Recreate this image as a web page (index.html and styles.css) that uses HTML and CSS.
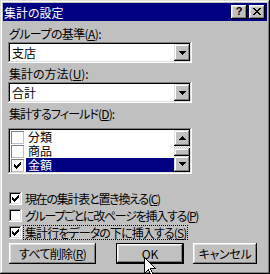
FILE: index.html
```html
<!DOCTYPE html>
<html lang="ja">
<head>
<meta charset="utf-8">
<title>集計の設定</title>
<link rel="stylesheet" href="styles.css">
</head>
<body>
<div class="win">
  <div class="titlebar">
    <span class="title">集計の設定</span>
    <div class="caps">
      <div class="capbtn help">?</div>
      <div class="capbtn close">
        <svg width="8" height="7" viewBox="0 0 8 7" shape-rendering="crispEdges"><path d="M0 0h2v1H0zM6 0h2v1H6zM1 1h2v1H1zM5 1h2v1H5zM2 2h4v1H2zM3 3h2v1H3zM2 4h4v1H2zM1 5h2v1H1zM5 5h2v1H5zM0 6h2v1H0zM6 6h2v1H6z" fill="#000"/></svg>
      </div>
    </div>
  </div>
  <div class="client">
    <div class="lbl lbl-first tight">グループの基準(<u>A</u>):</div>
    <div class="combo">
      <span class="val">支店</span>
      <div class="dd"><svg width="7" height="4" viewBox="0 0 7 4" shape-rendering="crispEdges"><path d="M0 0h7v1H0zM1 1h5v1H1zM2 2h3v1H2zM3 3h1v1H3z" fill="#000"/></svg></div>
    </div>
    <div class="lbl">集計の方法(<u>U</u>):</div>
    <div class="combo">
      <span class="val">合計</span>
      <div class="dd"><svg width="7" height="4" viewBox="0 0 7 4" shape-rendering="crispEdges"><path d="M0 0h7v1H0zM1 1h5v1H1zM2 2h3v1H2zM3 3h1v1H3z" fill="#000"/></svg></div>
    </div>
    <div class="lbl tighter">集計するフィールド(<u>D</u>):</div>
    <div class="listbox">
      <div class="rows">
        <div class="row"><span class="lcb"></span><span class="ltxt">分類</span></div>
        <div class="row"><span class="lcb"></span><span class="ltxt">商品</span></div>
        <div class="row sel"><span class="lcb"><svg width="7" height="7" viewBox="0 0 7 7" shape-rendering="crispEdges"><path d="M0 2h1v3H0zM1 3h1v3H1zM2 4h1v3H2zM3 3h1v3H3zM4 2h1v3H4zM5 1h1v3H5zM6 0h1v3H6z" fill="#000"/></svg></span><span class="ltxt">金額</span></div>
      </div>
      <div class="vscroll">
        <div class="sbtn"><svg width="7" height="4" viewBox="0 0 7 4" shape-rendering="crispEdges"><path d="M3 0h1v1H3zM2 1h3v1H2zM1 2h5v1H1zM0 3h7v1H0z" fill="#000"/></svg></div>
        <div class="track"><div class="thumb"></div></div>
        <div class="sbtn"><svg width="7" height="4" viewBox="0 0 7 4" shape-rendering="crispEdges"><path d="M0 0h7v1H0zM1 1h5v1H1zM2 2h3v1H2zM3 3h1v1H3z" fill="#000"/></svg></div>
      </div>
    </div>
    <div class="checks">
      <div class="chk"><span class="cb"><svg width="7" height="7" viewBox="0 0 7 7" shape-rendering="crispEdges"><path d="M0 2h1v3H0zM1 3h1v3H1zM2 4h1v3H2zM3 3h1v3H3zM4 2h1v3H4zM5 1h1v3H5zM6 0h1v3H6z" fill="#000"/></svg></span><span class="ctxt">現在の集計表と置き換える(<u>C</u>)</span></div>
      <div class="chk"><span class="cb"></span><span class="ctxt">グループごとに改ページを挿入する(<u>P</u>)</span></div>
      <div class="chk"><span class="cb"><svg width="7" height="7" viewBox="0 0 7 7" shape-rendering="crispEdges"><path d="M0 2h1v3H0zM1 3h1v3H1zM2 4h1v3H2zM3 3h1v3H3zM4 2h1v3H4zM5 1h1v3H5zM6 0h1v3H6z" fill="#000"/></svg></span><span class="ctxt ctxt-s focus">集計行をデータの下に挿入する(<u>S</u>)</span></div>
    </div>
    <div class="buttons">
      <button class="btn b-del">すべて削除(<u>R</u>)</button>
      <button class="btn b-ok">OK</button>
      <button class="btn b-cancel">キャンセル</button>
    </div>
  </div>
  <svg class="cursor" width="12" height="19" viewBox="0 0 12 19" shape-rendering="crispEdges">
    <path d="M0.5 0.5V16.5L4.5 12.5L7 18.5L9 17.5L6.5 11.5H11.5Z" fill="#fff" stroke="#000" stroke-width="1"/>
  </svg>
</div>
</body>
</html>
```

FILE: styles.css
```css
* { box-sizing: border-box; margin: 0; padding: 0; }
html, body { width: 270px; height: 274px; overflow: hidden; background: #c0c0c0; }
body {
  font-family: "Noto Sans CJK JP", "Liberation Sans", sans-serif;
  font-size: 12px;
  line-height: 13px;
  color: #000;
  font-feature-settings: "palt";
}
u { text-decoration: underline; text-underline-offset: 1px; }

.win {
  position: relative;
  width: 270px;
  height: 274px;
  background: #c0c0c0;
  padding: 3px;
  box-shadow: inset -1px -1px #000, inset 1px 1px #dfdfdf, inset -2px -2px #808080, inset 2px 2px #fff;
  display: flex;
  flex-direction: column;
}

.titlebar {
  height: 18px;
  flex: none;
  background: #000080;
  color: #fff;
  display: flex;
  align-items: center;
  justify-content: space-between;
  padding: 0 2px 0 1px;
}
.title { font-size: 12px; line-height: 13px; }
.caps { display: flex; gap: 2px; }
.capbtn {
  width: 16px;
  height: 14px;
  background: #c0c0c0;
  box-shadow: inset -1px -1px #000, inset 1px 1px #fff, inset -2px -2px #808080, inset 2px 2px #dfdfdf;
  display: flex;
  align-items: center;
  justify-content: center;
  color: #000;
}
.help { font-family: "Liberation Sans", sans-serif; font-weight: bold; font-size: 11px; line-height: 11px; padding-bottom: 1px; }
.close svg { display: block; margin-top: -1px; }

.client {
  flex: 1;
  display: flex;
  flex-direction: column;
  align-items: flex-start;
  padding-left: 5px;
}

.lbl { margin-top: 4px; padding-left: 1px; height: 13px; white-space: nowrap; }
.lbl-first { margin-top: 6px; }
.tight { letter-spacing: -0.6px; }
.tighter { letter-spacing: -0.9px; }
.lbl + .listbox { margin-top: 8px; }

.combo {
  margin-top: 2px;
  width: 184px;
  height: 21px;
  background: #fff;
  padding: 2px;
  box-shadow: inset -1px -1px #fff, inset 1px 1px #808080, inset -2px -2px #dfdfdf, inset 2px 2px #000;
  display: flex;
  align-items: center;
  justify-content: space-between;
}
.val { padding-left: 2px; }
.dd, .sbtn {
  width: 16px;
  height: 17px;
  background: #c0c0c0;
  box-shadow: inset -1px -1px #000, inset 1px 1px #dfdfdf, inset -2px -2px #808080, inset 2px 2px #fff;
  display: flex;
  align-items: center;
  justify-content: center;
}
.dd svg, .sbtn svg { display: block; }

.listbox {
  width: 184px;
  height: 46px;
  background: #fff;
  padding: 2px;
  box-shadow: inset -1px -1px #fff, inset 1px 1px #808080, inset -2px -2px #dfdfdf, inset 2px 2px #000;
  display: flex;
}
.rows { flex: 1; display: flex; flex-direction: column; }
.row { height: 14px; flex: none; display: flex; align-items: center; }
.lcb {
  width: 13px;
  height: 13px;
  margin-left: 1px;
  flex: none;
  background: #fff;
  box-shadow: inset 1px 1px #808080, inset -1px -1px #c0c0c0;
  display: flex;
  align-items: center;
  justify-content: center;
}
.ltxt { margin-left: 2px; padding-left: 2px; flex: 1; height: 14px; line-height: 14px; }
.sel .ltxt { background: #000080; color: #fff; }

.vscroll { width: 16px; display: flex; flex-direction: column; }
.sbtn { height: 16px; }
.track {
  flex: 1;
  background: repeating-conic-gradient(#c0c0c0 0 25%, #fff 0 50%) 0 0 / 2px 2px;
  display: flex;
  flex-direction: column;
  justify-content: flex-end;
}
.thumb {
  height: 8px;
  background: #c0c0c0;
  box-shadow: inset -1px -1px #000, inset 1px 1px #dfdfdf, inset -2px -2px #808080, inset 2px 2px #fff;
}

.checks { margin-top: 16px; display: flex; flex-direction: column; }
.chk { height: 17px; display: flex; align-items: center; padding-left: 1px; white-space: nowrap; }
.cb {
  width: 13px;
  height: 13px;
  flex: none;
  background: #fff;
  box-shadow: inset -1px -1px #fff, inset 1px 1px #808080, inset -2px -2px #dfdfdf, inset 2px 2px #000;
  display: flex;
  align-items: center;
  justify-content: center;
}
.cb svg { display: block; }
.ctxt { margin-left: 2px; padding: 0 1px; line-height: 13px; letter-spacing: -1.25px; }
.ctxt-s { letter-spacing: -0.9px; }
.focus { outline: 1px dotted #000; outline-offset: 0; }

.buttons { margin-top: 2px; display: flex; align-items: center; padding-left: 1px; }
.btn {
  height: 21px;
  font: inherit;
  font-feature-settings: "palt";
  color: #000;
  background: #c0c0c0;
  border: none;
  box-shadow: inset -1px -1px #000, inset 1px 1px #fff, inset -2px -2px #808080, inset 2px 2px #dfdfdf;
  display: flex;
  align-items: center;
  justify-content: center;
}
.b-del { width: 87px; letter-spacing: -0.7px; }
.b-ok {
  width: 68px;
  margin-left: 20px;
  box-shadow: inset 0 0 0 1px #000, inset -2px -2px #000, inset 2px 2px #fff, inset -3px -3px #808080, inset 3px 3px #dfdfdf;
}
.b-cancel { width: 64px; margin-left: 9px; letter-spacing: -0.3px; }

.cursor { position: absolute; left: 144px; top: 257px; }
```
